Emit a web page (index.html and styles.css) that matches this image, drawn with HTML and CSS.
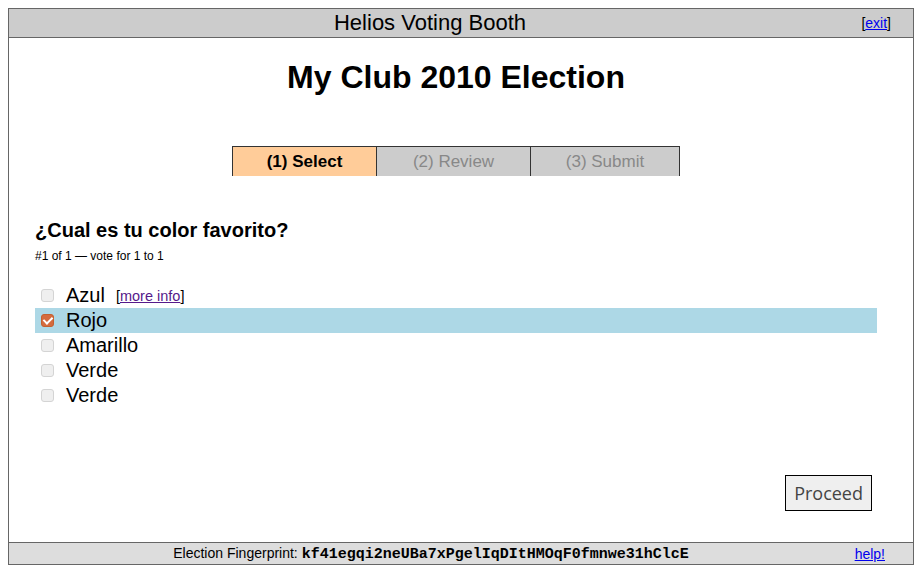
FILE: index.html
```html
<!DOCTYPE html>
<html>
<head>
<meta charset="utf-8">
<link rel="stylesheet" href="styles.css">
</head>
<body>
<div class="booth">
  <div class="header">
    <span class="header-title">Helios Voting Booth</span>
    <span class="exit">[<a href="#">exit</a>]</span>
  </div>
  <div class="content">
    <h1 class="title">My Club 2010 Election</h1>
    <div class="tabs">
      <div class="tab tab-active">(1) Select</div>
      <div class="tab tab-review">(2) Review</div>
      <div class="tab tab-submit">(3) Submit</div>
    </div>
    <h2 class="question">¿Cual es tu color favorito?</h2>
    <div class="qinfo">#1 of 1 — vote for 1 to 1</div>
    <div class="answers">
      <label class="answer"><input type="checkbox" class="cb"><span class="alabel">Azul</span><span class="more">[<a href="#">more info</a>]</span></label>
      <label class="answer selected"><input type="checkbox" class="cb" checked><span class="alabel">Rojo</span></label>
      <label class="answer"><input type="checkbox" class="cb"><span class="alabel">Amarillo</span></label>
      <label class="answer"><input type="checkbox" class="cb"><span class="alabel">Verde</span></label>
      <label class="answer"><input type="checkbox" class="cb"><span class="alabel">Verde</span></label>
    </div>
    <div class="actions">
      <button class="proceed">Proceed</button>
    </div>
  </div>
  <div class="footer">
    <span class="fp">Election Fingerprint: <code class="hash">kf41egqi2neUBa7xPgelIqDItHMOqF0fmnwe31hClcE</code></span>
    <span class="help-cell"><a class="help" href="#">help!</a></span>
  </div>
</div>
</body>
</html>
```
FILE: styles.css
```css
body {
  margin: 8px;
  font-family: "Liberation Sans", Arial, sans-serif;
  color: #000;
  background: #fff;
}
.booth {
  border: 1px solid #666;
  width: 904px;
  display: flex;
  flex-direction: column;
}
.header {
  height: 28px;
  background: #ccc;
  border-bottom: 1px solid #666;
  display: flex;
  align-items: center;
}
.header-title {
  flex: 1;
  text-align: center;
  font-size: 22px;
}
.exit {
  width: 40px;
  padding-right: 22px;
  text-align: right;
  font-size: 14px;
  align-self: flex-start;
  margin-top: 6px;
}
.exit a, .help { color: #00e; }
.content {
  height: 504px;
  display: flex;
  flex-direction: column;
  padding: 0 36px 0 26px;
}
.title {
  margin: 22px 0 0;
  font-size: 32px;
  line-height: 34px;
  text-align: center;
  font-weight: bold;
}
.tabs {
  margin: 52px auto 0;
  display: flex;
  border-top: 1px solid #333;
  border-left: 1px solid #333;
  height: 29px;
}
.tab {
  border-right: 1px solid #333;
  background: #ccc;
  color: #888;
  font-size: 17px;
  display: flex;
  align-items: center;
  justify-content: center;
}
.tab-active { width: 143px; background: #ffcc99; color: #000; font-weight: bold; }
.tab-review { width: 153px; }
.tab-submit { width: 148px; }
.question {
  margin: 42px 0 0;
  font-size: 20px;
  line-height: 24px;
  font-weight: bold;
}
.qinfo {
  margin-top: 7px;
  font-size: 12px;
  line-height: 14px;
}
.answers {
  margin-top: 20px;
  display: flex;
  flex-direction: column;
}
.answer {
  height: 25px;
  display: flex;
  align-items: center;
  font-size: 20px;
}
.answer.selected { background: #add8e6; }
.cb {
  appearance: none;
  -webkit-appearance: none;
  width: 13px;
  height: 13px;
  margin: 0 12px 0 6px;
  border: 1px solid #d4d4d4;
  border-radius: 3px;
  background: #efefef;
  position: relative;
}
.cb:checked {
  background: #d56b3e;
  border-color: #c4602f;
}
.cb:checked::after {
  content: "";
  position: absolute;
  left: 3px;
  top: 0px;
  width: 4px;
  height: 7px;
  border: solid #fff;
  border-width: 0 2px 2px 0;
  transform: rotate(45deg);
}
.more {
  font-size: 14.5px;
  margin-left: 11px;
}
.more a { color: #551a8b; }
.actions {
  margin-top: auto;
  margin-bottom: 31px;
  display: flex;
  justify-content: flex-end;
  padding-right: 5px;
}
.proceed {
  font-family: "Open Sans", sans-serif;
  font-size: 18px;
  color: #444;
  background: #efefef;
  border: 1px solid #000;
  border-radius: 0;
  height: 36px;
  padding: 0 8px;
}
.footer {
  height: 21px;
  background: #ddd;
  border-top: 1px solid #666;
  display: flex;
  align-items: center;
  font-size: 14px;
}
.fp {
  flex: 1;
  text-align: center;
}
.hash {
  font-family: "Liberation Mono", monospace;
  font-weight: bold;
  font-size: 15px;
}
.help-cell {
  width: 32px;
  padding-right: 28px;
  text-align: right;
}
.help {
  font-size: 14px;
}
```
